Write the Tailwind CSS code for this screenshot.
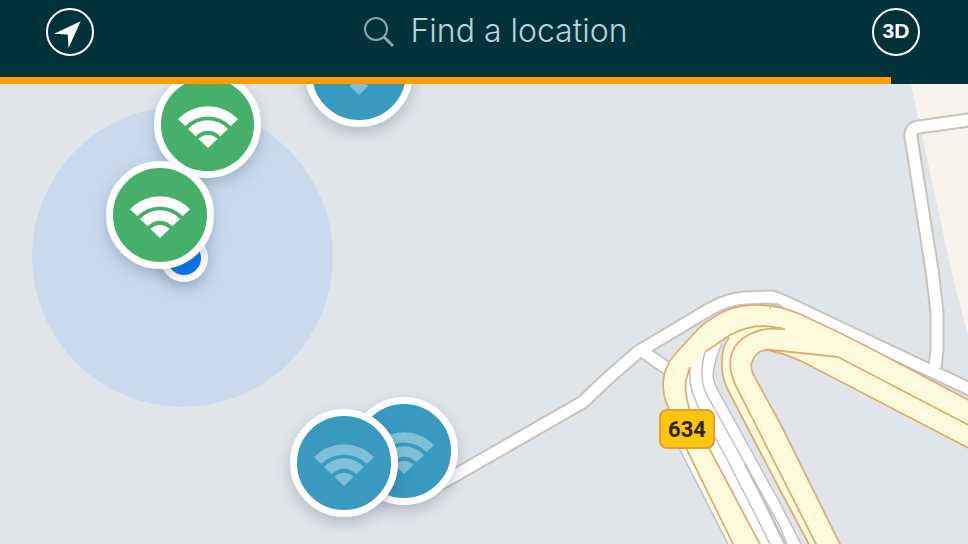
<!DOCTYPE html>
<html lang="en">
<head>
<meta charset="utf-8">
<meta name="viewport" content="width=device-width, initial-scale=1">
<title>Wi-Fi map</title>
<script src="https://cdn.jsdelivr.net/npm/@tailwindcss/browser@4"></script>
</head>
<body class="flex min-h-screen flex-col bg-[#e0e5e9] font-['Inter','Liberation_Sans',sans-serif]">
<svg class="hidden" aria-hidden="true">
  <symbol id="wifi" viewBox="-32 -43 64 44">
    <path d="M-30 -28.8A41.5 41.5 0 0 1 30 -28.8L22.7 -21.9A31.5 31.5 0 0 0 -22.7 -21.9Z"/>
    <path d="M-20 -19A27.5 27.5 0 0 1 20 -19L12.4 -11.8A17 17 0 0 0 -12.4 -11.8Z"/>
    <path d="M-9.4 -9A13 13 0 0 1 9.4 -9L0 0Z"/>
  </symbol>
</svg>

<header class="bg-[#02333a]">
  <div class="flex items-center pt-2 pr-12 pb-[21px] pl-[46px]">
    <button type="button" aria-label="My location" class="size-12 shrink-0 rounded-full border-2 border-white">
      <svg class="size-11" viewBox="-22 -22 44 44" fill="#fff" aria-hidden="true"><path d="M10.7 -10.8L-16 1.8L-2.3 2.6L-1.4 16Z"/></svg>
    </button>
    <label class="flex flex-1 items-center justify-center gap-4 pl-6">
      <svg class="size-8 shrink-0" viewBox="0 0 32 32" fill="none" stroke="#92a4ac" aria-hidden="true">
        <circle cx="13" cy="13" r="11" stroke-width="2"/><path d="M21 21L30 30" stroke-width="3"/>
      </svg>
      <input type="text" aria-label="Find a location" placeholder="Find a location" class="field-sizing-content bg-transparent pb-0.5 text-[32px] leading-10 font-light text-[#bcd3dc] outline-none placeholder:text-[#bcd3dc]">
    </label>
    <button type="button" aria-label="Switch to 3D view" class="flex size-12 shrink-0 items-center justify-center rounded-full border-2 border-white pb-0.5 font-['Liberation_Sans',sans-serif] text-[21px] font-bold text-white">3D</button>
  </div>
  <div role="progressbar" aria-label="Loading map" aria-valuenow="92" aria-valuemin="0" aria-valuemax="100" class="h-[7px]">
    <div class="h-full bg-[#ff9b04]" style="width:92%"></div>
  </div>
</header>

<main class="relative flex-1 overflow-hidden">
  <svg class="absolute inset-0 size-full" viewBox="0 84 968 460" preserveAspectRatio="xMinYMin slice" fill="none" stroke-linejoin="round" aria-hidden="true">
    <path d="M911 84H968V335L951 270Z" fill="#f8f3ec"/>
    <!-- local roads: casing, then surface -->
    <g stroke="#c9c3bd" stroke-width="15">
      <path d="M976 119L919 127Q910 128 911 137L932 270L937 312V350L935 368"/>
      <path d="M440 484L583 402L607 379L638 352L710 309Q728 299 745 298L772 297L785 302L880 347L976 392"/>
      <path d="M641 350L672 372"/>
    </g>
    <g stroke="#fff" stroke-width="11">
      <path d="M976 119L919 127Q910 128 911 137L932 270L937 312V350L935 368"/>
      <path d="M440 484L583 402L607 379L638 352L710 309Q728 299 745 298L772 297L785 302L880 347L976 392"/>
      <path d="M641 350L672 372"/>
    </g>
    <!-- service lanes between the two carriageways -->
    <path d="M686 362L705 350L722 343Q715 358 713 376Q714 384 720 394L780 503L801 544H758L684 400Z" fill="#fff"/>
    <path d="M672 434L680 450L728 544H740L692 445Z" fill="#fff"/>
    <g stroke="#c4bfbb" stroke-width="1.5">
      <path d="M722 343Q715 358 713 376Q714 384 720 394L780 503L801 544"/>
      <path d="M705 352Q701 366 702 378Q703 388 708 397L717 413L780 527L787 544"/>
      <path d="M690 368Q689 380 692 392L699 409L727 459L770 544"/>
      <path d="M745 464L762 497L785 544" stroke-width="2.5"/>
      <path d="M672 434L680 450L728 544"/>
    </g>
    <!-- route 634: surfaces -->
    <g fill="#fefbdc">
      <path d="M976 404L868 347L840 333L800 314Q776 304 750 305Q737 306 727 310Q712 317 700 327L677 352Q669 361 667 367Q661 380 664 394Q664 401 687 450L735 548H762L710 450L690 410Q684 393 686 380L690 367L705 352L730 335L729 338Q721 347 722 366Q722 378 728 390L780 490L811 548H842L780 423L753 374Q750 366 752 362Q756 350 768 350Q786 354 803 362L976 452Z"/>
    </g>
    <!-- route 634: edges and lane divider -->
    <g stroke="#e2ab72" stroke-width="1.8">
      <path d="M976 404L868 347L840 333L800 314Q776 304 750 305Q737 306 727 310Q712 317 700 327L677 352Q669 361 667 367Q661 380 664 394Q664 401 687 450L735 548"/>
      <path d="M762 548L710 450L690 410Q684 393 686 380L690 367"/>
      <path d="M705 352L730 335Q747 326 763 326Q777 327 785 329.5"/>
      <path d="M781 329Q765 327 750 334Q735 342 732 353Q727 368 736 386L780 473L818 548"/>
      <path d="M729 338Q721 347 722 366Q722 378 728 390L780 490L811 548"/>
      <path d="M842 548L780 423L753 374Q750 366 752 362Q756 350 768 350Q786 354 803 362L976 452"/>
      <path d="M767 349.5L838 357L976 429"/>
    </g>
    <path d="M770 305v4" stroke="#e2ab72"/>
    <path d="M772 306L773 304H778L784 308" stroke="#c4bfbb" stroke-width="1.5"/>
  </svg>

  <div class="absolute top-[22px] left-8 size-[301px] rounded-full bg-[#c9daed]"></div>
  <div class="absolute top-[150px] left-[160px] size-12 rounded-full border-7 border-white bg-[#0f78f4] shadow-[0_6px_14px_rgba(40,60,90,0.3)]"></div>

  <button type="button" aria-label="Available hotspot" class="absolute -top-[13px] left-[154px] flex size-[107px] items-center justify-center rounded-full border-7 border-white bg-[#46b06b] pt-1 shadow-[0_6px_14px_rgba(40,60,90,0.25)]">
    <svg class="h-11 w-16 shrink-0 fill-white" aria-hidden="true"><use href="#wifi"/></svg>
  </button>
  <button type="button" aria-label="Available hotspot" class="absolute top-[77px] left-[106px] flex size-[108px] items-center justify-center rounded-full border-7 border-white bg-[#46b06b] pt-1 shadow-[0_6px_14px_rgba(40,60,90,0.25)]">
    <svg class="h-11 w-16 shrink-0 fill-white" aria-hidden="true"><use href="#wifi"/></svg>
  </button>
  <button type="button" aria-label="Hotspot" class="absolute -top-[65px] left-[305px] flex size-[108px] items-center justify-center rounded-full border-7 border-white bg-[#389abf] pt-0.5 shadow-[0_6px_14px_rgba(40,60,90,0.25)]">
    <svg class="h-11 w-16 shrink-0 fill-[#7fc0d9]" aria-hidden="true"><use href="#wifi"/></svg>
  </button>
  <button type="button" aria-label="Hotspot" class="absolute top-[313px] left-[350px] flex size-[108px] items-center justify-center rounded-full border-7 border-white bg-[#389abf] pt-1 shadow-[0_6px_14px_rgba(40,60,90,0.25)]">
    <svg class="h-11 w-16 shrink-0 fill-[#7fc0d9]" aria-hidden="true"><use href="#wifi"/></svg>
  </button>
  <button type="button" aria-label="Hotspot" class="absolute top-[325px] left-[290px] flex size-[108px] items-center justify-center rounded-full border-7 border-white bg-[#389abf] pt-1 shadow-[0_6px_14px_rgba(40,60,90,0.25)]">
    <svg class="h-11 w-16 shrink-0 fill-[#7fc0d9]" aria-hidden="true"><use href="#wifi"/></svg>
  </button>

  <div class="absolute top-[325px] left-[659px] flex h-10 w-14 items-center justify-center rounded-lg border-2 border-[#dfa035] bg-[#fdc50b] font-['Roboto','Liberation_Sans',sans-serif] text-[22px] font-bold text-[#2e2508]">634</div>
</main>
</body>
</html>
